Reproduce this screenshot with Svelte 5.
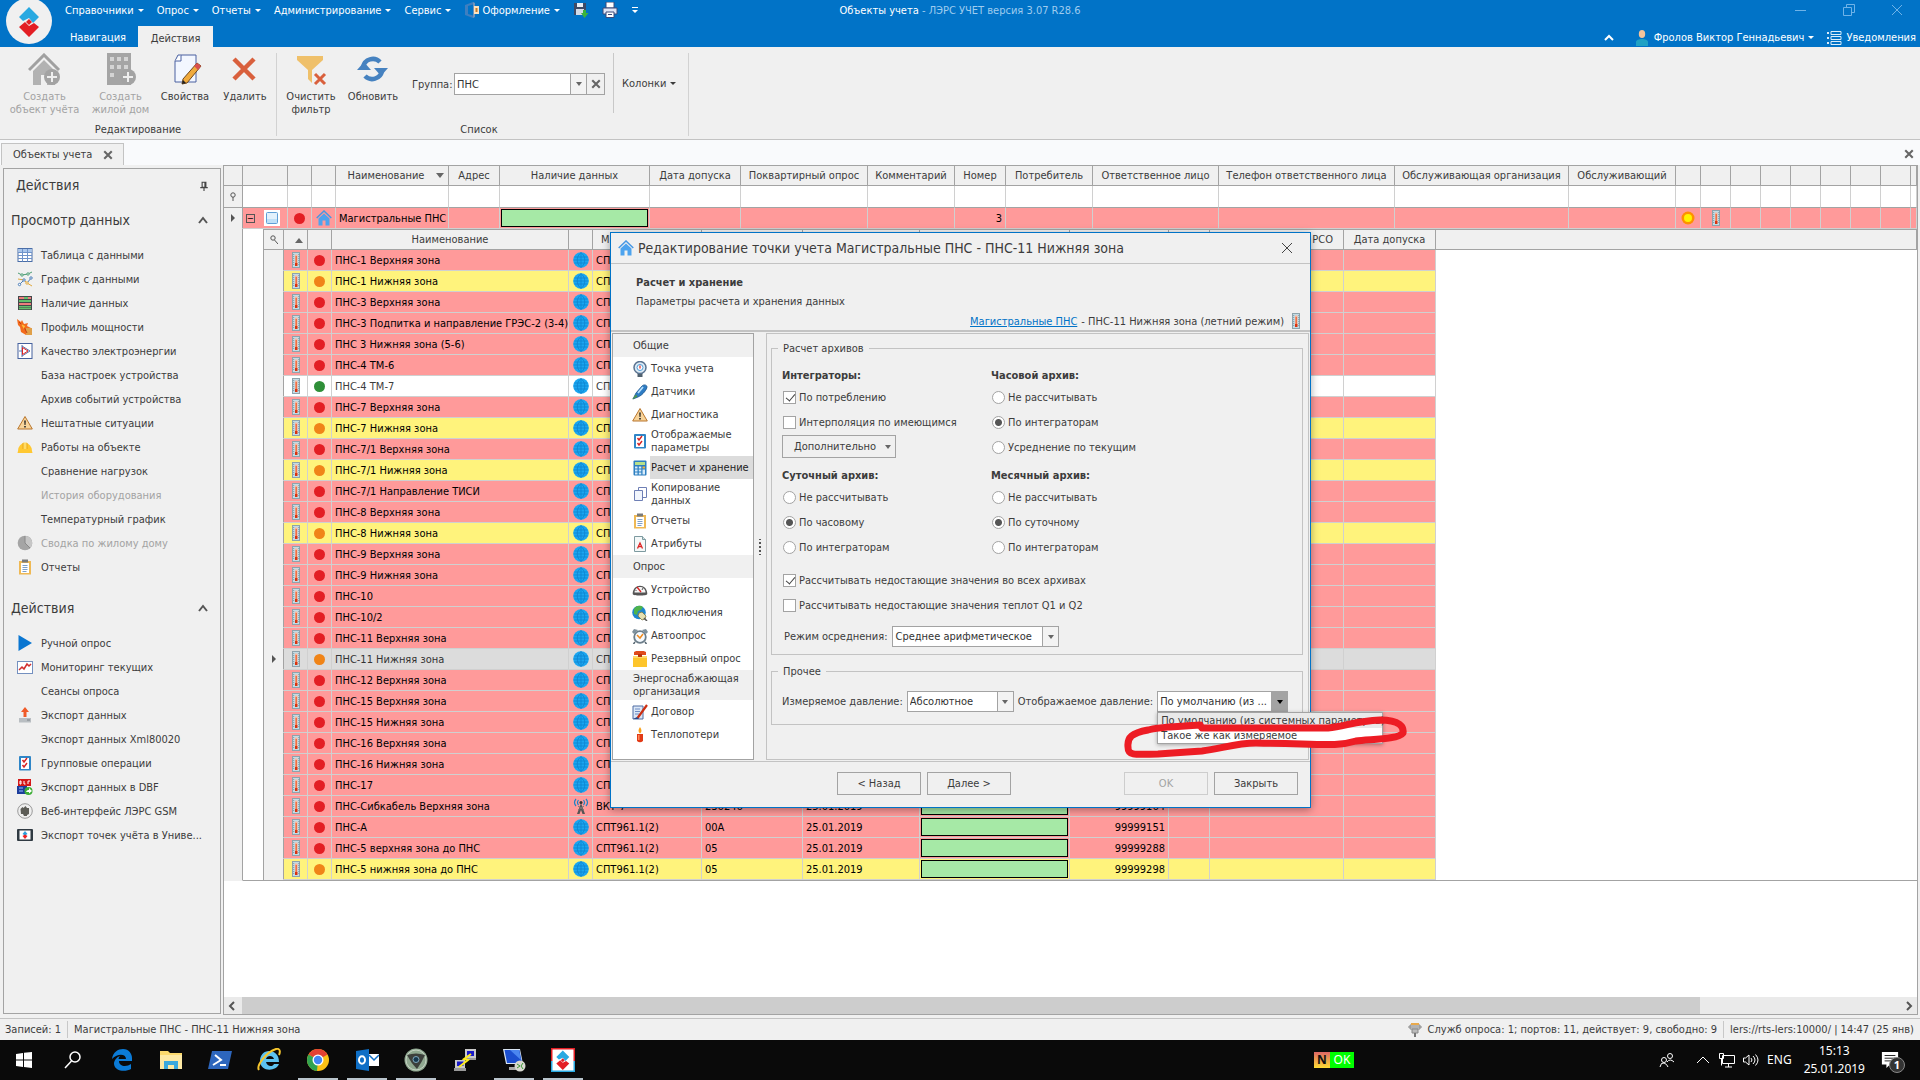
<script>
    const icons = {
        table: '<rect x="1" y="1.500" width="14" height="13" fill="#fff" stroke="#4a6ea8"/><path d="M1.500 2h13v3h-13z" fill="#a9c6ec"/><path d="M1 5.500h14M1 8.500h14M1 11.500h14M5.500 2v12.500M10.500 2v12.500" stroke="#6f93c9" fill="none"/>',
        chart: '<path d="M1 2l4 2 6-1 4-2" stroke="#4d9d74" fill="none"/><path d="M2 14l5-5 3 3 5-6" stroke="#4a7db8" fill="none"/><path d="M1 8l6 1 3 3 5 3" stroke="#e0a83c" fill="none"/><g fill="#fff" stroke="#4a7db8"><circle cx="2.500" cy="13.500" r="1.200"/><circle cx="7" cy="9" r="1.200"/><circle cx="10" cy="12" r="1.200" stroke="#e0a83c"/><circle cx="14" cy="7" r="1.200"/><circle cx="5" cy="4" r="1.200" stroke="#4d9d74"/><circle cx="11" cy="3" r="1.200" stroke="#4d9d74"/></g>',
        presence: '<rect x="1" y="1" width="14" height="14" fill="#44484a"/><path d="M2 2h12v2H2zM2 8h12v2H2z" fill="#ee7d7d"/><path d="M2 5h12v2H2zM2 11h12v1.500H2zM2 13h12v1.200H2z" fill="#63c06d"/><path d="M7 2h4v2H7z" fill="#63c06d"/>',
        power: '<path d="M0 0l4 3 1-2 2 4 4-1-1 3 4 2v6l-5 1-5-3-1-5-2-2z" fill="#f36b1c"/><path d="M9 9l6 0v7H9z" fill="#e0a049"/><path d="M2 3l5 5 3 6" stroke="#c33c10" fill="none"/><path d="M4 5l4 2-1 3z" fill="#ffc13b"/>',
        quality: '<rect x="1" y=".500" width="14" height="15" fill="#fff" stroke="#45619d"/><path d="M5 2v12M5 3l8 5-8 5M2 8h3" stroke="#5a74ad" fill="none"/><path d="M5.500 4.500L11 8l-5.500 3.500z" stroke="#d22" fill="none"/>',
        warning: '<path d="M8 1.500L15.300 14H.7z" fill="#f8d49a" stroke="#b8752c"/><path d="M7.200 5.500h1.600l-.3 4.500h-1zM7.200 11h1.600v1.500H7.200z" fill="#222"/>',
        helmet: '<path d="M1 12a7 8 0 0 1 14 0l.5 2H.5z" fill="#ffc832"/><path d="M6 3.500h4V10H6z" fill="#ffdb66"/><path d="M6 4v6M10 4v6" stroke="#eaa918" fill="none"/>',
        pie: '<circle cx="8" cy="8" r="7.300" fill="#a5a5a5"/><path d="M8 8V1a7 7 0 0 1 5 12z" fill="#c6c6c6"/><path d="M8 8V1M8 8l5 5" stroke="#888" fill="none"/>',
        report: '<path d="M2 2h12v13.500H2z" fill="#efb955"/><path d="M4 4h8v10H4z" fill="#fff"/><path d="M5 .500h6v3H5z" fill="#7a7a7a"/><path d="M5.500 6.500h5M5.500 8.500h5M5.500 10.500h5M5.500 12.500h4" stroke="#7d9fc9" fill="none"/>',
        play: '<path d="M1.500 0L15 8 1.500 16z" fill="#0a76d1"/>',
        monitor: '<rect x=".500" y="2.500" width="15" height="12" fill="#fff" stroke="#7490bf"/><path d="M2 11l3-3 2 2 3-5 2 2 2-2" stroke="#d22f2f" stroke-width="1.500" fill="none"/>',
        export: '<path d="M8 0l4 5H9.500v5h-3V5H4z" fill="#f05a28"/><path d="M2 11h12v4.500H2z" fill="#b9bec2"/><path d="M10 13h3" stroke="#7c8287"/>',
        checklist: '<rect x="2" y="1" width="12" height="14.500" rx="1" fill="#2f86c8"/><path d="M4 3h8v11H4z" fill="#fff"/><path d="M5.500 5l1.500 2 3-4M5.500 10l1.500 2 3-4" stroke="#d62222" stroke-width="1.400" fill="none"/>',
        dbf: '<path d="M1 0h13v7H1z" fill="#d31818"/><path d="M3 2v3h1V2zM7 2v3h1.500M11 5V2h2" stroke="#fff" fill="none"/><path d="M0 7h10v8H0z" fill="#1c3d9c"/><path d="M2 9h4M2 12h4" stroke="#9bc1ff"/><circle cx="11.500" cy="12" r="4" fill="#3cae35"/><path d="M9 13c1-2 2-2 3-2V9l3 3-3 2.500V13z" fill="#fff"/>',
        gsm: '<circle cx="8" cy="8" r="7.300" fill="#eee" stroke="#9a9a9a"/><path d="M3.500 6l2-2 1 1 2-2 1.500 2h2v6l-2 1v1H7l-1-2H4z" fill="#5c5c56"/>',
        points: '<rect x="0" y="2" width="16" height="12" rx="1" fill="#303a42"/><path d="M2.500 3.500h11v9h-11z" fill="#fff"/><path d="M8 4L5.500 7 8 8.500 10.500 7z" fill="#2ba0dc"/><path d="M8 12l2.500-3L8 7.500 5.500 9z" fill="#e22"/>',
        house: '<path d="M.7 8L8 1l7.300 7" stroke="#4697e3" stroke-width="1.500" fill="none"/><path d="M2.500 8.500L8 3.500l5.500 5V15.500h-4v-5h-3v5h-4z" fill="#4da3ee"/>',
        thermo: '<rect x="4.500" y=".500" width="7" height="15" fill="#c3dbe4" stroke="#8ea3ac"/><path d="M5.700 2v12M10.800 2v12" stroke="#6b8894" stroke-width=".8" stroke-dasharray="1 1"/><path d="M7 2.500h2.500V12H7z" fill="#f9b59c"/><path d="M7.500 4h1.500v8H7.500z" fill="#ee6f45"/><path d="M7 11h2.500v3H7z" fill="#d8330f"/>',
        globe: '<circle cx="8" cy="8" r="7.800" fill="#1ba6f0"/><path d="M.5 8h15M1.500 5h13M1.500 11h13M8 .5v15M8 .5c-5 4-5 11 0 15M8 .5c5 4 5 11 0 15" stroke="#0d7fcb" stroke-width=".7" fill="none"/>',
        antenna: '<path d="M8 5l4 11H9.500L8 12l-1.500 4H4z" fill="#555"/><path d="M5 8l6 4M11 8l-6 4" stroke="#777"/><path d="M5.500 2q-2 2.500 0 5M3 1q-3 3.500 0 7M10.500 2q2 2.500 0 5M13 1q3 3.500 0 7" stroke="#1d83c6" stroke-width="1.200" fill="none"/><circle cx="8" cy="4.500" r="1.500" fill="#333"/>',
        gauge: '<path d="M5.500 11h5v5h-5z" fill="#51616f"/><circle cx="8" cy="6.500" r="6" fill="#dceaf5" stroke="#5a7390" stroke-width="1.500"/><circle cx="8" cy="6.500" r="3" fill="#fff" stroke="#4f9ed8"/><path d="M8 4.500v3" stroke="#d22" stroke-width="1.200"/>',
        sensor: '<path d="M1 15l3-6 6-7c2-2 5-1 5 1s-4 8-9 10z" fill="#2d7cc4" stroke="#1b548b" stroke-width=".8"/><path d="M6 9l5-6" stroke="#b6e0ff" stroke-width="1.800"/><path d="M0 15.500l4-5 1.500 2z" fill="#4f9a48"/>',
        calc: '<rect x="1.500" y=".500" width="13" height="15" rx="1" fill="#2d7fc1"/><path d="M3 2h10v3H3z" fill="#b7e08a"/><g fill="#d8ecfa"><path d="M3 6.500h2.500v2H3zM6.800 6.500h2.500v2H6.800zM3 9.500h2.500v2H3zM6.800 9.500h2.500v2H6.800zM3 12.500h2.500v2H3zM6.800 12.500h2.500v2H6.800zM10.500 9.500H13v5h-2.500z"/></g><path d="M10.500 6.500H13v2h-2.500z" fill="#f2b23a"/>',
        copy: '<path d="M6.500 1.500h8v10h-8z" fill="#fff" stroke="#6e7fb5"/><path d="M2.500 4.500h8v10h-8z" fill="#f2f6fd" stroke="#6e7fb5"/>',
        attr: '<path d="M2.500 .5h8l3 3v12h-11z" fill="#f4f8f8" stroke="#7d9aa0"/><path d="M10.500 .5v3h3" fill="#cfe0e0" stroke="#7d9aa0"/><path d="M5.500 12.500L8 7l2.500 5.500M6.500 10.700h3" stroke="#d22" stroke-width="1.300" fill="none"/>',
        device: '<path d="M.7 12c0-11 14.600-11 14.600 0 0 2-14.600 2-14.600 0z" fill="#555"/><path d="M2.500 10.500c0-7.500 11-7.500 11 0z" fill="#f5f5f5"/><path d="M5 5l4 5" stroke="#d22" stroke-width="1.300"/><path d="M11 6l-1 2M3.500 8l1 1" stroke="#555"/>',
        connect: '<circle cx="7" cy="7.500" r="6.800" fill="#1f86cf"/><path d="M2 4c2-4 7-4 9-2l-2 3-3 1-1 4-3-1z" fill="#4fb34b"/><path d="M7 8l3-1 4 4-1 3-3 1-4-4z" fill="#e6e0b0" stroke="#7d7743" stroke-width=".8"/><path d="M12 13l3 3" stroke="#555" stroke-width="1.500"/>',
        alarm: '<circle cx="8" cy="9" r="5.800" fill="#f5faff" stroke="#6d7e8a" stroke-width="1.800"/><path d="M0 4l2-3 4 1-4 4zM16 4l-2-3-4 1 4 4z" fill="#7f919d"/><path d="M5 7l3 3 3-4" stroke="#f08a1d" stroke-width="1.500" fill="none"/><path d="M3 14l-1.500 2M13 14l1.500 2" stroke="#54646f" stroke-width="1.500"/>',
        reserve: '<path d="M1 5h14v11H1z" fill="#fdc52c"/><path d="M1 5h14v2H1z" fill="#ffd96a"/><path d="M2 1c3-2 9-2 12 0v3H2z" fill="#e04a1b"/><path d="M6 3h4v3H6z" fill="#b8350e"/>',
        contract: '<path d="M1 2h10v13H1z" fill="#dbe7f7" stroke="#4f6ca3"/><path d="M3 5h5M3 7.500h5M3 10h4" stroke="#6f8cc2"/><path d="M15 1L7 12l-1.500 2" stroke="#cc2f12" stroke-width="2.200"/><path d="M1 15l4-2 2 2z" fill="#29478a"/>',
        candle: '<path d="M5 7h6v7q-3 2.500-6 0z" fill="#e23a16"/><path d="M6 8h1.500v5H6z" fill="#ff8a5c"/><path d="M8 0q3 4 0 6.500Q5 4 8 0z" fill="#f9a11b"/>',
        sun: '<circle cx="8" cy="8" r="6.500" fill="#ff9000"/><circle cx="8" cy="8" r="4" fill="#fff200"/>',
        sheet: '<path d="M0 0h16v16H0z" fill="#fff"/><rect x="2.500" y="2.500" width="11" height="11" rx="1" fill="#e2f1fc" stroke="#5e9ed6"/><path d="M3 9h10v4H3z" fill="#bfe0f7"/>',
        user: '<ellipse cx="8" cy="4" rx="3.200" ry="4" fill="#f3c39c"/><path d="M2 16V12c0-4 12-4 12 0v4z" fill="#1fa1c4"/>',
        list: '<path d="M1 2h2v2H1zM1 7h2v2H1zM1 12h2v2H1z" fill="#d9ecfa"/><path d="M5 1.500h10v3H5zM5 6.500h10v3H5zM5 11.500h10v3H5z" fill="none" stroke="#d9ecfa"/>',
        office: '<path d="M1 3l8-3v2.500L4 4v8l5 1.500V16l-8-3z" fill="#3f7fc0"/><path d="M9 0l2 1v14l-2 1z" fill="#6f93bb"/><path d="M10 4h5v8h-5z" fill="#fbe3c0"/><path d="M11.500 6h2v4h-2z" fill="#c77a2b"/>',
        save: '<path d="M1 1h12v12H1z" fill="#3d4a66"/><path d="M4 1h6v4H4z" fill="#e8eef5"/><path d="M3 7h8v6H3z" fill="#d2dbe8"/><path d="M10 8h3v3h2.500L11.500 16 8 11h2z" fill="#3cb43c"/>',
        print: '<path d="M4 0h8v6H4z" fill="#fff" stroke="#3b4a7a"/><path d="M1 6h14v6H1z" fill="#dfe5f5" stroke="#3b4a7a"/><path d="M4 10h8v5.500H4z" fill="#fff" stroke="#3b4a7a"/><path d="M6 12.500h4" stroke="#3b4a7a"/>',
        plug: '<path d="M3 3h10v4H3z" fill="#ddd" stroke="#888"/><path d="M4 1h8v2H4z" fill="#e9a94c"/><path d="M1 5h14M5 7h6v4H5z" fill="#bbb" stroke="#888"/><path d="M7 11h2v4H7z" fill="#777"/>',
        pin: '<path d="M5 2h6v8H5zM2 10.500h12M8 11v5M9.500 2v8" fill="none" stroke="#444" stroke-width="1.800"/>',
        cross: '<path d="M3 3l10 10M13 3L3 13" stroke="#666" stroke-width="2.800"/>'
    };

    const big = {
        addHouse: '<path d="M1 17L16 2l15 15" stroke="#a0a0a0" stroke-width="3" fill="none"/><path d="M5 18L16 7l11 11v14H19V22h-6v10H5z" fill="#b2b2b2"/><circle cx="24" cy="24" r="8" fill="#a3a3a3"/><path d="M24 19v10M19 24h10" stroke="#eee" stroke-width="2"/>',
        addBuilding: '<path d="M3 0h24v32H3z" fill="#a5a5a5"/><path d="M6 4h4v4H6zM13 4h4v4h-4zM20 4h4v4h-4zM6 12h4v4H6zM13 12h4v4h-4zM20 12h4v4h-4zM6 20h4v4H6z" fill="#d4d4d4"/><circle cx="24" cy="24" r="8" fill="#a3a3a3"/><path d="M24 19v10M19 24h10" stroke="#eee" stroke-width="2"/>',
        props: '<path d="M10 2h18v27H7V8z" fill="#f3f7ff" stroke="#4a61a0"/><path d="M7 8h6V2" fill="#fff" stroke="#4a61a0"/><path d="M29 10l4 3-14 17-5 1 1-5z" fill="#f0aa3c" stroke="#6d4820"/><path d="M29 10l4 3-3 4-4-4z" fill="#d85050"/><path d="M14 31l1-4 3 3z" fill="#222"/>',
        remove: '<path d="M6 6l20 20M26 6L6 26" stroke="#d9603d" stroke-width="4.500"/>',
        clearFilter: '<path d="M3 3h26v4L18 17v13l-4-4V17L3 7z" fill="#efc06a"/><path d="M21 21l10 10M31 21L21 31" stroke="#d9603d" stroke-width="3"/>',
        refresh: '<path d="M7 14a10 10 0 0 1 17-5M26 18a10 10 0 0 1-17 5" stroke="#4682c0" stroke-width="4.500" fill="none"/><path d="M1 17h14L8 9zM18 15h14l-7 8z" fill="#4682c0"/>'
    };

    const menu = ['Справочники', 'Опрос', 'Отчеты', 'Администрирование', 'Сервис'];

    const sideGroups = [
        {title: 'Просмотр данных', items: [
            ['table', 'Таблица с данными'],
            ['chart', 'График с данными'],
            ['presence', 'Наличие данных'],
            ['power', 'Профиль мощности'],
            ['quality', 'Качество электроэнергии'],
            ['', 'База настроек устройства'],
            ['', 'Архив событий устройства'],
            ['warning', 'Нештатные ситуации'],
            ['helmet', 'Работы на объекте'],
            ['', 'Сравнение нагрузок'],
            ['', 'История оборудования', true],
            ['', 'Температурный график'],
            ['pie', 'Сводка по жилому дому', true],
            ['report', 'Отчеты']
        ]},
        {title: 'Действия', items: [
            ['play', 'Ручной опрос'],
            ['monitor', 'Мониторинг текущих'],
            ['', 'Сеансы опроса'],
            ['export', 'Экспорт данных'],
            ['', 'Экспорт данных Xml80020'],
            ['checklist', 'Групповые операции'],
            ['dbf', 'Экспорт данных в DBF'],
            ['gsm', 'Веб-интерфейс ЛЭРС GSM'],
            ['points', 'Экспорт точек учёта в Униве...']
        ]}
    ];

    const columns = [
        {label: '', width: 19}, {label: '', width: 45}, {label: '', width: 24}, {label: '', width: 24},
        {label: 'Наименование', width: 113, sort: true},
        {label: 'Адрес', width: 51},
        {label: 'Наличие данных', width: 150},
        {label: 'Дата допуска', width: 91},
        {label: 'Поквартирный опрос', width: 127},
        {label: 'Комментарий', width: 87},
        {label: 'Номер', width: 51},
        {label: 'Потребитель', width: 87},
        {label: 'Ответственное лицо', width: 126},
        {label: 'Телефон ответственного лица', width: 176},
        {label: 'Обслуживающая организация', width: 174},
        {label: 'Обслуживающий', width: 107},
        {label: '', width: 25}, {label: '', width: 30}, {label: '', width: 30}, {label: '', width: 30},
        {label: '', width: 30}, {label: '', width: 30}, {label: '', width: 30}, {label: '', width: 30},
        {label: ''}
    ];

    const detailWidths = [20, 24, 24, 237, 24, 109, 101, 117, 150, 99, 41, 134, 92];

    // name, state, model, number, date, id
    const points = [
        ['ПНС-1 Верхняя зона', 'red'],
        ['ПНС-1 Нижняя зона', 'yellow'],
        ['ПНС-3 Верхняя зона', 'red'],
        ['ПНС-3 Подпитка и направление ГРЭС-2 (3-4)', 'red'],
        ['ПНС 3 Нижняя зона (5-6)', 'red'],
        ['ПНС-4 ТМ-6', 'red'],
        ['ПНС-4 ТМ-7', 'white'],
        ['ПНС-7 Верхняя зона', 'red'],
        ['ПНС-7 Нижняя зона', 'yellow'],
        ['ПНС-7/1 Верхняя зона', 'red'],
        ['ПНС-7/1 Нижняя зона', 'yellow'],
        ['ПНС-7/1 Направление ТИСИ', 'red'],
        ['ПНС-8 Верхняя зона', 'red'],
        ['ПНС-8 Нижняя зона', 'yellow'],
        ['ПНС-9 Верхняя зона', 'red'],
        ['ПНС-9 Нижняя зона', 'red'],
        ['ПНС-10', 'red'],
        ['ПНС-10/2', 'red'],
        ['ПНС-11 Верхняя зона', 'red'],
        ['ПНС-11 Нижняя зона', 'current'],
        ['ПНС-12 Верхняя зона', 'red'],
        ['ПНС-15 Верхняя зона', 'red'],
        ['ПНС-15 Нижняя зона', 'red'],
        ['ПНС-16 Верхняя зона', 'red'],
        ['ПНС-16 Нижняя зона', 'red'],
        ['ПНС-17', 'red'],
        ['ПНС-Сибкабель Верхняя зона', 'red', 'ВКТ-7', '236246', '25.01.2019', '99999164'],
        ['ПНС-А', 'red', 'СПТ961.1(2)', '00A', '25.01.2019', '99999151'],
        ['ПНС-5 верхняя зона до ПНС', 'red', 'СПТ961.1(2)', '05', '25.01.2019', '99999288'],
        ['ПНС-5 нижняя зона до ПНС', 'yellow', 'СПТ961.1(2)', '05', '25.01.2019', '99999298']
    ];

    const pages = [
        {title: 'Общие', items: [
            ['gauge', 'Точка учета'],
            ['sensor', 'Датчики'],
            ['warning', 'Диагностика'],
            ['checklist', 'Отображаемые параметры'],
            ['calc', 'Расчет и хранение'],
            ['copy', 'Копирование данных'],
            ['report', 'Отчеты'],
            ['attr', 'Атрибуты']
        ]},
        {title: 'Опрос', items: [
            ['device', 'Устройство'],
            ['connect', 'Подключения'],
            ['alarm', 'Автоопрос'],
            ['reserve', 'Резервный опрос']
        ]},
        {title: 'Энергоснабжающая организация', items: [
            ['contract', 'Договор'],
            ['candle', 'Теплопотери']
        ]}
    ];

    let currentPage = $state('Расчет и хранение');
    let hourly = $state('По интеграторам');
    let daily = $state('По часовому');
    let monthly = $state('По суточному');
</script>

{#snippet icon(name)}
    <svg class="icon" viewBox="0 0 16 16" aria-hidden="true">{@html icons[name] ?? ''}</svg>
{/snippet}

{#snippet bigIcon(name)}
    <svg class="big-icon" viewBox="0 0 34 33" aria-hidden="true">{@html big[name]}</svg>
{/snippet}

{#snippet logo()}
    <path d="M12 0L22 10 16 16 12 11 6 14 2 10z" fill="#29a9e1"/>
    <path d="M12 30L2 20l6-5 4 4 5-3 5 4z" fill="#e31e24"/>
    <path d="M12 12l3 3-3 3-3-3z" fill="#e31e24"/>
{/snippet}

<div class="app">
    <header class="titlebar">
        <svg class="logo" viewBox="0 0 46 46" aria-hidden="true">
            <circle cx="23" cy="23" r="23" fill="#f0f0f0"/>
            <g transform="translate(11 9)">{@render logo()}</g>
        </svg>
        <div class="top-row">
            <nav class="menu">
                {#each menu as item}
                    <button>{item}<i class="caret"></i></button>
                {/each}
                <button class="with-icon">{@render icon('office')}Оформление<i class="caret"></i></button>
                <button aria-label="Сохранить">{@render icon('save')}</button>
                <button aria-label="Печать">{@render icon('print')}</button>
                <button aria-label="Панель"><svg class="overflow" viewBox="0 0 8 8"><path d="M1 1h6v1H1zM1 4h6L4 7z"/></svg></button>
            </nav>
            <div class="caption">Объекты учета <span>- ЛЭРС УЧЕТ версия 3.07 R28.6</span></div>
            <div class="window-buttons">
                <button aria-label="Свернуть"><svg viewBox="0 0 12 12"><path d="M0 6.500h11"/></svg></button>
                <button aria-label="Восстановить"><svg viewBox="0 0 12 12"><path d="M.5 3.500h8v8h-8zM3.500 3V.500h8v8H9"/></svg></button>
                <button aria-label="Закрыть"><svg viewBox="0 0 12 12"><path d="M1 1l10 10M11 1L1 11"/></svg></button>
            </div>
        </div>
        <div class="tab-row">
            <button class="ribbon-tab">Навигация</button>
            <button class="ribbon-tab active">Действия</button>
            <div class="account">
                <button aria-label="Скрыть ленту"><svg class="chevron" viewBox="0 0 10 8"><path d="M1 6l4-4 4 4"/></svg></button>
                <button class="user">{@render icon('user')}Фролов Виктор Геннадьевич<i class="caret"></i></button>
                <button>{@render icon('list')}Уведомления</button>
            </div>
        </div>
    </header>

    <section class="ribbon">
        <div class="ribbon-group">
            <div class="tools">
                <button class="tool wide" disabled>{@render bigIcon('addHouse')}Создать<br>объект учёта</button>
                <button class="tool" disabled>{@render bigIcon('addBuilding')}Создать<br>жилой дом</button>
                <button class="tool">{@render bigIcon('props')}Свойства</button>
                <button class="tool">{@render bigIcon('remove')}Удалить</button>
            </div>
            <div class="ribbon-label">Редактирование</div>
        </div>
        <div class="ribbon-group list">
            <div class="tools">
                <button class="tool">{@render bigIcon('clearFilter')}Очистить<br>фильтр</button>
                <button class="tool">{@render bigIcon('refresh')}Обновить</button>
                <div class="group-filter">
                    <label for="group">Группа:</label>
                    <div class="combo"><select id="group"><option>ПНС</option></select><i class="drop"></i></div>
                    <button class="clear" aria-label="Очистить группу">{@render icon('cross')}</button>
                </div>
                <button class="columns">Колонки<i class="caret"></i></button>
            </div>
            <div class="ribbon-label">Список</div>
        </div>
    </section>

    <div class="doc-tabs">
        <div class="doc-tab">Объекты учета <button aria-label="Закрыть вкладку">{@render icon('cross')}</button></div>
        <button class="close-all" aria-label="Закрыть">{@render icon('cross')}</button>
    </div>

    <div class="workspace">
        <aside class="sidebar">
            <h2>Действия {@render icon('pin')}</h2>
            {#each sideGroups as group}
                <h3>{group.title}<svg class="chevron dark" viewBox="0 0 10 8"><path d="M1 7l4-5 4 5"/></svg></h3>
                <ul>
                    {#each group.items as [name, label, disabled]}
                        <li><button {disabled}>{@render icon(name)}{label}</button></li>
                    {/each}
                </ul>
            {/each}
        </aside>

        <main class="grid">
            <div class="grid-body">
                <table class="objects">
                    <colgroup>
                        {#each columns as col}
                            <col style={col.width ? `width:${col.width}px` : ''}>
                        {/each}
                    </colgroup>
                    <thead>
                        <tr>
                            {#each columns as col}
                                <th class:sorted={col.sort}>{col.label}{#if col.sort}<i class="sort-down"></i>{/if}</th>
                            {/each}
                        </tr>
                    </thead>
                    <tbody>
                        <tr class="filter-row">
                            {#each columns as col, i}
                                <td>{#if i === 0}<svg class="mark" viewBox="0 0 8 10"><circle cx="4" cy="3" r="2.200"/><path d="M4 5v4"/></svg>{/if}</td>
                            {/each}
                        </tr>
                        <tr class="record red">
                            <td class="indicator"><i class="pointer"></i></td>
                            <td><div class="expander"><button aria-label="Свернуть строку">−</button>{@render icon('sheet')}</div></td>
                            <td class="c"><i class="dot"></i></td>
                            <td class="c">{@render icon('house')}</td>
                            <td>Магистральные ПНС</td>
                            <td></td>
                            <td class="bar"><div></div></td>
                            <td></td><td></td><td></td>
                            <td class="num">3</td>
                            <td></td><td></td><td></td><td></td><td></td>
                            <td class="c">{@render icon('sun')}</td>
                            <td class="c">{@render icon('thermo')}</td>
                            {#each Array(7) as _}<td></td>{/each}
                        </tr>
                        <tr>
                            <td class="indicator"></td>
                            <td class="nested" colspan={columns.length - 1}>
                                <table class="points">
                                    <colgroup>
                                        {#each detailWidths as w}<col style="width:{w}px">{/each}
                                        <col>
                                    </colgroup>
                                    <thead>
                                        <tr>
                                            <th><svg class="mark" viewBox="0 0 8 10"><circle cx="3" cy="3" r="2.200"/><path d="M4.500 5L8 9"/></svg></th>
                                            <th><i class="sort-up"></i></th>
                                            <th></th>
                                            <th>Наименование</th>
                                            <th></th>
                                            <th class="left">М</th>
                                            <th></th><th></th><th></th><th></th><th></th>
                                            <th class="right">РСО</th>
                                            <th>Дата допуска</th>
                                            <th></th>
                                        </tr>
                                    </thead>
                                    <tbody>
                                        {#each points as [name, state, model, number, date, id]}
                                            <tr class={state}>
                                                <td class="indicator">{#if state === 'current'}<i class="pointer"></i>{/if}</td>
                                                <td class="c">{@render icon('thermo')}</td>
                                                <td class="c"><i class="dot"></i></td>
                                                <td>{name}</td>
                                                <td class="c">{@render icon(model === 'ВКТ-7' ? 'antenna' : 'globe')}</td>
                                                <td>{model ?? 'СПТ'}</td>
                                                <td>{number ?? ''}</td>
                                                <td>{date ?? ''}</td>
                                                <td class="bar"><div></div></td>
                                                <td class="num">{id ?? ''}</td>
                                                <td></td><td></td><td></td>
                                                <td class="rest"></td>
                                            </tr>
                                        {/each}
                                    </tbody>
                                </table>
                            </td>
                        </tr>
                    </tbody>
                </table>
            </div>
            <div class="scrollbar">
                <svg class="chevron dark" viewBox="0 0 8 10"><path d="M6 1L2 5l4 4"/></svg>
                <div class="track"><div class="thumb"></div></div>
                <svg class="chevron dark" viewBox="0 0 8 10"><path d="M2 1l4 4-4 4"/></svg>
            </div>
        </main>
    </div>

    <footer class="status">
        <span>Записей: 1</span>
        <span class="sep">Магистральные ПНС - ПНС-11 Нижняя зона</span>
        <span class="service">{@render icon('plug')}Служб опроса: 1; портов: 11, действует: 9, свободно: 9</span>
        <span class="sep">lers://rts-lers:10000/ | 14:47 (25 янв)</span>
    </footer>

    <div class="taskbar">
        <div class="apps">
            <button aria-label="Пуск"><svg viewBox="0 0 24 24"><path d="M4 6l7-1v6.500H4zM12 4.800L20 4v7.500h-8zM4 12.500h7V19l-7-1zM12 12.500h8V20l-8-1z" fill="#fff"/></svg></button>
            <button aria-label="Поиск"><svg viewBox="0 0 24 24"><circle cx="14" cy="9" r="5" fill="none" stroke="#fff" stroke-width="1.500"/><path d="M10.500 13L4 20" stroke="#fff" stroke-width="1.500"/></svg></button>
            <button aria-label="Edge"><svg viewBox="0 0 24 24"><path d="M2 11C3 4 8 1 13 1c6 0 9 5 9 9v3H9c0 6 8 6 12 3v5c-5 3-16 3-17-5 0-4 3-7 6-8-1 1-1.500 2-1.500 3H16c0-5-8-6-14 0z" fill="#0b7bd7"/></svg></button>
            <button aria-label="Проводник"><svg viewBox="0 0 24 24"><path d="M1 3h8l2 2h12v16H1z" fill="#fbd96d"/><path d="M1 7h22v14H1z" fill="#fde9a4"/><path d="M5 13h14v8h-4v-4H9v4H5z" fill="#3ba9dd"/></svg></button>
            <button aria-label="PowerShell"><svg viewBox="0 0 24 24"><path d="M4 3h20l-4 18H0z" fill="#2d66bd"/><path d="M7 7l6 5-8 5M12 17h6" stroke="#fff" stroke-width="2" fill="none"/></svg></button>
            <button aria-label="Internet Explorer"><svg viewBox="0 0 24 24"><path d="M12 3c6 0 10 4 10 11H9c1 5 7 5 8 2h5c-3 8-19 8-19-3C3 7 7 3 12 3zM9 11h8c-1-4-7-4-8 0z" fill="#5cc3f1"/><path d="M2 22C-1 18 9 4 19 1c5-1 4 4 3 6" stroke="#f6c62d" stroke-width="2" fill="none"/></svg></button>
            <button class="open" aria-label="Chrome"><svg viewBox="0 0 24 24"><circle cx="12" cy="12" r="11" fill="#fbc116"/><path d="M12 12L2.500 6.500a11 11 0 0 1 19 0z" fill="#e34133"/><path d="M12 12L2.500 6.500A11 11 0 0 0 11 23z" fill="#31a350"/><circle cx="12" cy="12" r="5.500" fill="#fff"/><circle cx="12" cy="12" r="4.200" fill="#4286f5"/></svg></button>
            <button class="open" aria-label="Outlook"><svg viewBox="0 0 24 24"><path d="M1 3l13-2v22L1 21z" fill="#0f6fc6"/><path d="M14 6h10v12H14z" fill="#fff"/><path d="M14 7l5 5 5-5" stroke="#0f6fc6" stroke-width="1.500" fill="none"/><ellipse cx="7" cy="12" rx="3" ry="3.800" fill="none" stroke="#fff" stroke-width="2"/></svg></button>
            <button class="open" aria-label="Монитор"><svg viewBox="0 0 24 24"><circle cx="12" cy="12" r="11.500" fill="#8fa890"/><circle cx="12" cy="12" r="10" fill="none" stroke="#c6d2c4"/><path d="M3 7q9-3 18 0-3 7-8 14Q7 15 3 7z" fill="#3c3f3b"/><circle cx="12" cy="11.500" r="3" fill="#16384e" stroke="#7fa7bd"/></svg></button>
            <button aria-label="PuTTY"><svg viewBox="0 0 24 24"><path d="M12 1h11v10H12zM2 12h10v9H2z" fill="#c9c9c9"/><path d="M14 3h7v5h-7zM4 13.500h6.500V18H4z" fill="#1919c8"/><path d="M1 20h12v3H1zM11 10h12v2H11z" fill="#999"/><path d="M18 6l-7 5 4 1-9 7" stroke="#ffec1c" stroke-width="2" fill="none"/></svg></button>
            <button class="open" aria-label="Удаленный рабочий стол"><svg viewBox="0 0 24 24"><path d="M1 1h17l3 15H4z" fill="#d8e4f2"/><path d="M2.500 2h15l2.500 13H5z" fill="#1c4fcf"/><path d="M8 2h9l2 10z" fill="#4b86ef"/><path d="M7 19h10v3H7z" fill="#aaa"/><circle cx="18" cy="18" r="5.500" fill="#d8d8d0"/><path d="M15 16l3 2-3 2M21 15l-2 3 2 3" stroke="#3c9a35" fill="none"/></svg></button>
            <button class="open" aria-label="ЛЭРС УЧЕТ"><svg viewBox="0 0 24 24"><path d="M0 0h24v24H0z" fill="#29a9e1"/><path d="M0 0h24v13H0z" fill="#e31e24"/><path d="M1.500 1.500h21v21h-21z" fill="#fff"/><g transform="translate(4 2.500) scale(.65)">{@render logo()}</g></svg></button>
        </div>
        <div class="monitor-badge"><b>N</b><span>OK</span></div>
        <div class="tray">
            <svg class="people" viewBox="0 0 16 16"><circle cx="11" cy="4" r="2.500"/><path d="M8 10q3-4 7 0"/><circle cx="5" cy="8" r="2.500"/><path d="M1 15q1-5 4-4t4 4"/></svg>
            <svg viewBox="0 0 16 16"><path d="M2 11l6-6 6 6"/></svg>
            <svg viewBox="0 0 16 16"><path d="M3.500 3.500h12v8h-12zM6 15h7M9.500 12v3M.5 1.500h4v5h-4zM2.500 6.500v7"/></svg>
            <svg viewBox="0 0 16 16"><path d="M.5 6h2L6 3v10L2.500 10h-2zM8 6q2 2 0 4M10 4q4 4 0 8M12.500 2.500q5 5.500 0 11"/></svg>
            <span>ENG</span>
            <div class="clock">15:13<br>25.01.2019</div>
            <button class="notes" aria-label="Центр уведомлений">
                <svg viewBox="0 0 20 20"><path d="M1 1h18v14h-9l-4 4v-4H1z" fill="#fff" stroke="none"/><path d="M4 5h12M4 8h12M4 11h12" stroke="#111"/></svg>
                <em>1</em>
            </button>
        </div>
    </div>

    <div class="dialog" role="dialog" aria-labelledby="dialog-title">
        <div class="dialog-title">
            {@render icon('house')}
            <h1 id="dialog-title">Редактирование точки учета Магистральные ПНС - ПНС-11 Нижняя зона</h1>
            <button aria-label="Закрыть окно"><svg viewBox="0 0 12 12"><path d="M1 1l10 10M11 1L1 11"/></svg></button>
        </div>
        <div class="dialog-head">
            <strong>Расчет и хранение</strong>
            <p>Параметры расчета и хранения данных</p>
            <div class="crumb"><a href="#object">Магистральные ПНС</a> - ПНС-11 Нижняя зона (летний режим) {@render icon('thermo')}</div>
        </div>
        <div class="dialog-body">
            <nav class="pages">
                {#each pages as group}
                    <div class="page-group">{group.title}</div>
                    {#each group.items as [name, label]}
                        <button class="page" class:selected={label === currentPage} onclick={() => currentPage = label}>
                            {@render icon(name)}<span>{label}</span>
                        </button>
                    {/each}
                {/each}
            </nav>
            <div class="splitter"></div>
            <div class="page-body">
                <fieldset class="archives">
                    <legend>Расчет архивов</legend>
                    <div class="options">
                        <div>
                            <h4>Интеграторы:</h4>
                            <label><input type="checkbox" checked>По потреблению</label>
                            <label><input type="checkbox">Интерполяция по имеющимся</label>
                            <button class="more">Дополнительно<i class="drop"></i></button>
                        </div>
                        <div>
                            <h4>Часовой архив:</h4>
                            {#each ['Не рассчитывать', 'По интеграторам', 'Усреднение по текущим'] as option}
                                <label><input type="radio" name="hourly" value={option} bind:group={hourly}>{option}</label>
                            {/each}
                        </div>
                        <div>
                            <h4>Суточный архив:</h4>
                            {#each ['Не рассчитывать', 'По часовому', 'По интеграторам'] as option}
                                <label><input type="radio" name="daily" value={option} bind:group={daily}>{option}</label>
                            {/each}
                        </div>
                        <div>
                            <h4>Месячный архив:</h4>
                            {#each ['Не рассчитывать', 'По суточному', 'По интеграторам'] as option}
                                <label><input type="radio" name="monthly" value={option} bind:group={monthly}>{option}</label>
                            {/each}
                        </div>
                    </div>
                    <div class="missing">
                        <label><input type="checkbox" checked>Рассчитывать недостающие значения во всех архивах</label>
                        <label><input type="checkbox">Рассчитывать недостающие значения теплот Q1 и Q2</label>
                    </div>
                    <div class="row">
                        <label for="average">Режим осреднения:</label>
                        <div class="combo average"><select id="average"><option>Среднее арифметическое</option></select><i class="drop"></i></div>
                    </div>
                </fieldset>
                <fieldset class="other">
                    <legend>Прочее</legend>
                    <div class="row">
                        <label for="measured">Измеряемое давление:</label>
                        <div class="combo measured"><select id="measured"><option>Абсолютное</option></select><i class="drop"></i></div>
                        <label for="shown">Отображаемое давление:</label>
                        <div class="combo shown">
                            <select id="shown"><option>По умолчанию (из ...</option></select><i class="drop"></i>
                            <ul class="popup">
                                <li class="hover">По умолчанию (из системных параметров)</li>
                                <li>Такое же как измеряемое</li>
                            </ul>
                            <svg class="marker" viewBox="0 0 284 44" aria-hidden="true">
                                <path d="M46 12L76 10 78 13 128 13 204 13C222 11 232 6 256 5 276 5 280 12 279 18 274 25 244 24 232 26 212 32 200 29 132 28 112 28 96 34 78 36L34 39C8 40 4 40 4 32 3 22 8 18 24 15 34 12 46 12 76 10"/>
                            </svg>
                        </div>
                    </div>
                </fieldset>
            </div>
        </div>
        <div class="dialog-buttons">
            <button>&lt; Назад</button>
            <button>Далее &gt;</button>
            <button class="ok" disabled>OK</button>
            <button>Закрыть</button>
        </div>
    </div>
</div>

<style>
    :global(body) {margin: 0; overflow: hidden;}
    .app {
        position: relative; display: flex; flex-direction: column; height: 100vh; overflow: hidden;
        background: #f0f0f0; color: #3c3c3c; font: 11px/13px "DejaVu Sans Condensed", "Noto Sans", sans-serif;
    }
    .app :global(*) {box-sizing: border-box;}
    button, select {font: inherit; color: inherit; background: none; border: 0; padding: 0; margin: 0; white-space: nowrap;}
    h1, h2, h3, h4, p, ul {margin: 0; padding: 0; font-weight: normal; list-style: none;}
    .icon {width: 16px; height: 16px; flex: none; display: block;}
    .caret {display: inline-block; border: 3px solid transparent; border-top-color: currentColor; border-bottom: 0; margin-left: 4px; vertical-align: 2px;}
    .chevron {width: 10px; height: 8px; fill: none; stroke: #fff; stroke-width: 2;}
    .chevron.dark {stroke: #555;}

    .titlebar {position: relative; height: 47px; background: #0173c7; color: #fff;}
    .logo {position: absolute; left: 6px; top: -2px; width: 46px; height: 46px;}
    .top-row {display: grid; grid-template-columns: 1fr auto 1fr; height: 20px; align-items: center;}
    .menu {display: flex; align-items: center; padding-left: 65px; gap: 13px;}
    .menu button {display: flex; align-items: center;}
    .menu .with-icon .icon, .menu .with-icon :global(.icon) {margin-right: 2px;}
    .overflow {width: 8px; height: 8px; fill: #fff;}
    .caption span {color: #9fccef;}
    .window-buttons {display: flex; justify-content: flex-end; gap: 36px; padding-right: 17px;}
    .window-buttons svg {width: 12px; height: 12px; display: block; fill: none; stroke: #6fb3e8;}
    .tab-row {display: flex; height: 27px; align-items: stretch; padding-left: 60px;}
    .ribbon-tab {width: 78px; padding: 8px 2px 0 0;}
    .ribbon-tab.active {width: 75px; background: #f0f0f0; color: #3c3c3c; margin-top: 6px; height: 21px; padding: 3px 0 0;}
    .account {margin-left: auto; display: flex; gap: 12px; align-items: center; padding: 8px 4px 0 0;}
    .account button {display: flex; align-items: center; gap: 4px;}
    .account .user {margin-left: 8px;}
    .account .caret {margin-left: 0;}

    .ribbon {display: flex; height: 93px; border-bottom: 1px solid #c3c3c3; padding: 6px 0 3px;}
    .ribbon-group {display: flex; flex-direction: column; justify-content: space-between; width: 277px; border-right: 1px solid #d2d2d2; padding: 0 4px;}
    .ribbon-group.list {width: 412px; padding-left: 5px;}
    .ribbon-label {text-align: center; line-height: 12px;}
    .list .ribbon-label {padding-right: 8px;}
    .tools {display: flex; align-items: flex-start;}
    .tool {flex: none; width: 60px; line-height: 13px; padding-right: 2px;}
    .tool.wide {width: 83px;}
    .tool:nth-child(2) {width: 69px;}
    .tool:disabled {color: #a3a3a3;}
    .big-icon {display: block; width: 34px; height: 33px; margin: 0 auto 4px;}
    .list .tool:nth-child(2) {width: 64px;}
    .group-filter {display: flex; align-items: center; margin-top: 20px; padding-left: 6px;}
    .group-filter label {width: 42px; white-space: nowrap;}
    .group-filter .combo {width: 133px; height: 22px;}
    .clear {display: flex; align-items: center; justify-content: center; width: 18px; height: 22px; border: 1px solid #a3a3a3; border-left: 0;}
    .clear :global(.icon), .doc-tabs :global(.icon) {width: 12px; height: 12px;}
    .columns {height: 60px; margin-left: 8px; padding-left: 8px; border-left: 1px solid #c8c8c8;}

    .combo {position: relative; display: flex; height: 21px; border: 1px solid #a3a3a3; background: #fff;}
    .combo select {appearance: none; flex: 1; min-width: 0; padding: 0 2px; outline: 0; color: #333;}
    .combo .drop {width: 16px; border-left: 1px solid #a3a3a3; background: #f3f3f3;}
    .drop {display: flex; align-items: center; justify-content: center;}
    .drop::after {content: ''; border: 3px solid transparent; border-top: 4px solid #666; border-bottom: 0;}

    .doc-tabs {display: flex; justify-content: space-between; height: 25px; background: #f9fafc; padding: 3px 5px 0 1px;}
    .doc-tab {display: flex; align-items: center; gap: 10px; width: 123px; padding: 0 6px 0 11px; white-space: nowrap; border: 1px solid #c3c3c3; border-bottom: 0; background: #f0f0f0;}

    .workspace {flex: 1; display: flex; min-height: 0; padding: 0 2px 3px 3px; gap: 2px; border-bottom: 1px solid #c3c3c3;}
    .sidebar {flex: none; width: 218px; margin: 3px 0 1px; border: 1px solid #a3a3a3;}
    .sidebar h2 {display: flex; justify-content: space-between; align-items: center; font-size: 14px; line-height: 33px; padding: 0 11px 0 12px;}
    .sidebar h2 :global(.icon) {width: 10px; height: 10px;}
    .sidebar h3 {display: flex; justify-content: space-between; align-items: center; font-size: 14px; line-height: 36px; padding: 0 12px 0 7px;}
    .sidebar ul {padding: 5px 0 11px 13px;}
    .sidebar li button {display: flex; align-items: center; gap: 8px; height: 24px;}
    .sidebar button:disabled {color: #a3a3a3;}

    .grid {flex: 1; min-width: 0; display: flex; flex-direction: column; background: #fff; border: 1px solid #a3a3a3;}
    .grid-body {flex: 1; min-height: 0; overflow: hidden;}
    table {width: 100%; table-layout: fixed; border-collapse: separate; border-spacing: 0; color: #000;}
    th, td {padding: 0; overflow: hidden; white-space: nowrap; font-weight: normal; border-right: 1px solid #d0d0d0; border-bottom: 1px solid #d0d0d0;}
    td {height: 21px; padding: 0 0 0 3px; text-align: left;}
    th {height: 20px; background: #f0f0f0; color: #3c3c3c; border-color: #a3a3a3; text-align: center;}
    th.left {text-align: left; padding-left: 8px;}
    th.right {text-align: right; padding-right: 10px;}
    td.c {padding: 0;}
    .c :global(.icon) {margin: 0 auto;}
    td.num {text-align: right; padding-right: 3px;}
    td.indicator, .filter-row td:first-child {background: #f0f0f0; border-right-color: #a3a3a3; border-bottom-color: transparent; padding: 0;}
    .filter-row td {height: 22px; border-bottom-color: #a3a3a3;}
    .filter-row td:first-child {border-bottom-color: #a3a3a3;}
    .mark {display: block; width: 8px; height: 10px; margin: 0 auto; fill: none; stroke: #555;}
    .sort-down {display: inline-block; border: 4px solid transparent; border-top: 5px solid #666; border-bottom: 0; margin-left: 12px; vertical-align: 1px;}
    .sorted {padding-left: 8px;}
    .sort-up {display: inline-block; border: 4px solid transparent; border-bottom: 5px solid #666; border-top: 0; margin-left: 6px;}
    .pointer {display: block; width: 4px; margin: 0 auto; border: 4px solid transparent; border-left-color: #555; border-right: 0;}
    .dot {display: block; width: 11px; height: 11px; margin: 0 auto; border-radius: 50%; background: #e31e24;}
    .red td:not(.indicator, .rest) {background: #ff9a9a;}
    .yellow td:not(.indicator, .rest) {background: #fff37c;}
    .current td:not(.indicator, .rest) {background: #dcdcdc; color: #333;}
    .white td {color: #3c3c3c;}
    .yellow .dot, .current .dot {background: #f08418;}
    .white .dot {background: #2f8f38;}
    td.bar {padding: 1px;}
    .bar div {height: 18px; border: 1px solid #000; background: #a6e9a6;}
    .expander {display: flex; align-items: center; justify-content: space-between; padding-right: 7px;}
    .expander button {width: 9px; height: 9px; border: 1px solid #555; line-height: 6px; font-size: 9px;}
    .nested {padding: 0 0 0 20px; border-right: 0; border-color: #a3a3a3;}
    .points {border-left: 1px solid #a3a3a3; border-top: 1px solid #a3a3a3;}
    td.rest {border-color: transparent;}

    .scrollbar {display: flex; align-items: center; height: 17px; background: #eaeaea; padding: 0 4px;}
    .scrollbar .chevron {width: 8px; height: 10px;}
    .track {flex: 1; height: 100%; padding: 0 6px;}
    .thumb {width: 88%; height: 100%; background: #cdcdcd;}

    .status {display: flex; align-items: center; height: 21px; padding: 0 6px 0 5px; white-space: nowrap;}
    .status .sep {border-left: 1px solid #c8c8c8; line-height: 17px; margin-left: 6px; padding-left: 6px;}
    .service {margin-left: auto; display: flex; align-items: center; gap: 5px;}

    .taskbar {display: flex; height: 40px; background: #0a0a0a; color: #fff; font: 12px/18px "Noto Sans", sans-serif; align-items: stretch;}
    .apps {flex: 1; display: flex; gap: 9px; padding-left: 4px;}
    .apps button {width: 40px; display: flex; align-items: center; justify-content: center; border-bottom: 2px solid transparent; border-top: 2px solid transparent;}
    .apps .open {border-bottom-color: #b9c4cc;}
    .apps svg {width: 24px; height: 24px;}
    .monitor-badge {display: flex; align-items: center; line-height: 16px;}
    .monitor-badge b {background: linear-gradient(#d66, #fd3); color: #111; width: 16px; text-align: center;}
    .monitor-badge span {background: #0f0; width: 24px; text-align: center;}
    .tray {flex: 1; max-width: 566px; display: flex; align-items: center; justify-content: flex-end; gap: 8px; padding-right: 21px;}
    .tray svg {width: 16px; height: 16px; fill: none; stroke: #fff;}
    .tray .people {margin-right: 12px;}
    .clock {text-align: center; margin: 0 8px 0 4px;}
    .notes {position: relative; color: #fff;}
    .tray .notes svg {display: block; width: 18px; height: 18px;}
    .notes em {position: absolute; left: 8px; top: 6px; width: 16px; height: 16px; border-radius: 50%; background: #333; border: 1px solid #888; font: bold 11px/14px "Noto Sans", sans-serif; text-align: center;}

    .dialog {position: absolute; left: 610px; top: 232px; width: 701px; background: #f0f0f0; border: 1px solid #0173c7; box-shadow: 0 2px 8px rgba(0, 0, 0, .35);}
    .dialog-title {display: flex; align-items: center; gap: 4px; height: 31px; padding: 0 17px 0 7px; border-bottom: 1px solid #c3c3c3;}
    .dialog-title h1 {flex: 1; font-size: 14px; line-height: 18px;}
    .dialog-title svg {display: block;}
    .dialog-title button svg {width: 12px; height: 12px; fill: none; stroke: #444;}
    .dialog-head {padding: 12px 6px 1px 25px; border-bottom: 2px solid #c3c3c3;}
    .dialog-head p {padding-top: 6px;}
    .crumb {display: flex; justify-content: flex-end; align-items: center; gap: 4px; padding-top: 5px;}
    .crumb a {color: #0173c7;}
    .dialog-body {display: flex; padding: 1px; border-bottom: 1px solid #c3c3c3;}
    .pages {flex: none; width: 142px; background: #fff; border: 1px solid #a3a3a3; padding: 0 0 13px;}
    .page-group {display: flex; align-items: center; min-height: 23px; background: #f0f0f0; padding: 2px 10px 2px 20px;}
    .page {display: flex; align-items: center; gap: 2px; width: 100%; min-height: 23px; padding-left: 19px; text-align: left; white-space: normal;}
    .page span {flex: 1; padding: 2px 10px 2px 1px;}
    .page.selected span {background: #dcdcdc; color: #222; padding: 5px 0 5px 1px; white-space: nowrap;}
    .splitter {flex: none; width: 12px; align-self: center; height: 16px; background: radial-gradient(circle, #555 1px, transparent 1px) center / 12px 4px repeat-y;}
    .page-body {flex: 1; min-width: 0; border: 1px solid #c3c3c3; padding: 8px 5px 0 4px;}
    fieldset {margin: 0; border: 1px solid #c3c3c3; padding: 0 0 0 10px; min-width: 0;}
    legend {padding: 0 5px; margin-left: -4px;}
    .options {display: grid; grid-template: 100px auto / 209px 1fr; padding-top: 14px;}
    h4 {font-weight: bold; line-height: 13px; margin-bottom: 3px;}
    .options label, .missing label {display: flex; align-items: center; gap: 3px; height: 25px;}
    .missing {padding-top: 8px;}
    input {appearance: none; position: relative; flex: none; width: 13px; height: 13px; margin: 0 0 0 1px; border: 1px solid #a3a3a3; background: #fff;}
    input[type=radio] {border-radius: 50%;}
    input[type=radio]:checked {background: radial-gradient(circle, #555 3px, #fff 4px);}
    input[type=checkbox]:checked::after {content: ''; position: absolute; left: 4px; top: 0; width: 4px; height: 8px; border: solid #444; border-width: 0 1px 1px 0; transform: rotate(40deg);}
    .more {display: flex; align-items: center; justify-content: space-between; width: 114px; height: 23px; padding: 0 4px 0 11px; border: 1px solid #a3a3a3;}
    .row {display: flex; align-items: center; white-space: nowrap;}
    .archives .row {padding: 8px 0 7px 2px;}
    .average {width: 167px; margin-left: 5px;}
    .other {margin-top: 10px;}
    .other .row {padding: 13px 0 12px;}
    .measured {width: 107px; margin: 0 4px;}
    .shown {width: 131px; margin-left: 4px;}
    .shown > .drop {background: #a3a3a3;}
    .shown > .drop::after {border-top-color: #000;}
    .popup {position: absolute; left: -1px; top: 20px; width: 226px; border: 1px solid #a3a3a3; background: #fff; box-shadow: 0 1px 4px rgba(0, 0, 0, .3);}
    .popup li {line-height: 15px; padding-left: 3px;}
    .popup .hover {background: #e9e9e9;}
    .marker {position: absolute; left: -34px; top: 23px; width: 284px; height: 44px; fill: none; stroke: #ed1c24; stroke-width: 7; stroke-linecap: round; stroke-linejoin: round;}
    .dialog-buttons {display: flex; gap: 6px; padding: 10px 12px 12px 226px;}
    .dialog-buttons button {width: 84px; height: 23px; border: 1px solid #a3a3a3;}
    .dialog-buttons button:disabled {color: #a3a3a3; border-color: #cdcdcd;}
    .dialog-buttons .ok {margin-left: auto;}
</style>
